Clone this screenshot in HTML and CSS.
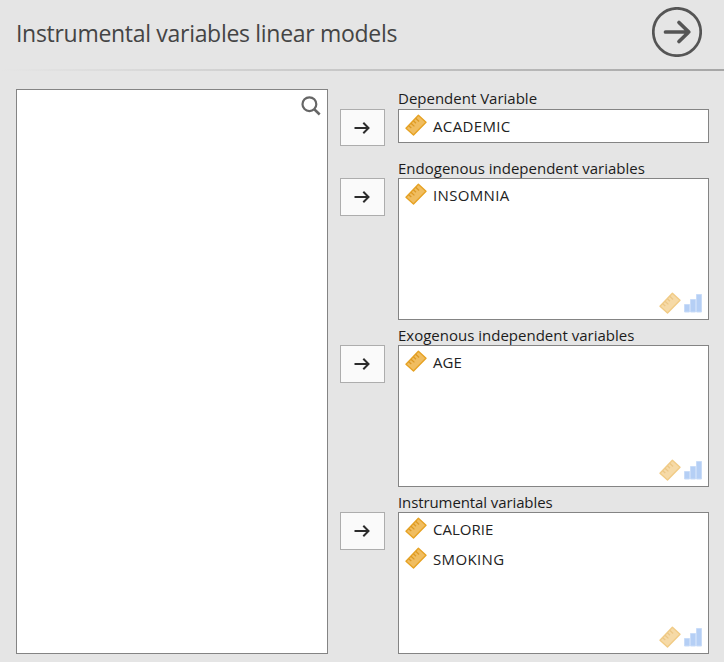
FILE: index.html
```html
<!DOCTYPE html>
<html lang="en">
<head>
<meta charset="utf-8">
<title>Instrumental variables linear models</title>
<link rel="stylesheet" href="styles.css">
</head>
<body>
<svg class="defs" aria-hidden="true">
  <symbol id="ruler" viewBox="0 0 22 22">
    <path d="M1 14.3 13.4 1.2 21 8.2 8.5 21z" fill="#f0bd60" stroke="#e6a223" stroke-width="1.4" stroke-linejoin="round"/>
    <path d="M3.7 11.7l2.6 2.4M6 9.2l3.4 3.2M8.4 6.8l2.6 2.4M10.7 4.3l3.4 3.2" fill="none" stroke="#dd9a25" stroke-width="1.3"/>
  </symbol>
  <symbol id="bars" viewBox="0 0 18 20">
    <path d="M.5 11.500h5v7.500h-5zM6.500 6.500h5v12.500h-5zM12.500 1.500h5v17.500h-5z" fill="#b5cff5" stroke="#c9dcf8"/>
  </symbol>
  <symbol id="arrow" viewBox="0 0 16 14">
    <path d="M.5 7h14M9.300 1.800 14.500 7l-5.200 5.200" fill="none" stroke="#2c2c2c" stroke-width="2"/>
  </symbol>
</svg>
<header class="header">
  <h1 class="title">Instrumental variables linear models</h1>
  <svg class="go" viewBox="0 0 50 50"><circle cx="25" cy="25" r="23.700" fill="none" stroke="#555" stroke-width="2.700"/><path d="M13.500 25h23M27 15.500 36.800 25 27 34.500" fill="none" stroke="#555" stroke-width="3.700" stroke-linecap="round" stroke-linejoin="round"/></svg>
</header>
<div class="rule"></div>
<main class="main">
  <section class="source">
    <svg class="search" viewBox="0 0 20 20"><circle cx="8.400" cy="8.200" r="6.900" fill="none" stroke="#666" stroke-width="2.200"/><path d="M13 13l5.700 5.500" stroke="#666" stroke-width="2.500"/></svg>
  </section>
  <div class="targets">
    <section class="row single">
      <button class="move"><svg><use href="#arrow"/></svg></button>
      <div class="field">
        <div class="label">Dependent Variable</div>
        <div class="box"><div class="item"><svg><use href="#ruler"/></svg><span class="wide">ACADEMIC</span></div></div>
      </div>
    </section>
    <section class="row">
      <button class="move"><svg><use href="#arrow"/></svg></button>
      <div class="field">
        <div class="label">Endogenous independent variables</div>
        <div class="box"><div class="item"><svg><use href="#ruler"/></svg><span class="wide">INSOMNIA</span></div>
          <div class="types"><svg class="r"><use href="#ruler"/></svg><svg class="b"><use href="#bars"/></svg></div></div>
      </div>
    </section>
    <section class="row">
      <button class="move"><svg><use href="#arrow"/></svg></button>
      <div class="field">
        <div class="label">Exogenous independent variables</div>
        <div class="box"><div class="item"><svg><use href="#ruler"/></svg><span>AGE</span></div>
          <div class="types"><svg class="r"><use href="#ruler"/></svg><svg class="b"><use href="#bars"/></svg></div></div>
      </div>
    </section>
    <section class="row">
      <button class="move"><svg><use href="#arrow"/></svg></button>
      <div class="field">
        <div class="label tight">Instrumental variables</div>
        <div class="box"><div class="item"><svg><use href="#ruler"/></svg><span>CALORIE</span></div>
          <div class="item"><svg><use href="#ruler"/></svg><span class="wide">SMOKING</span></div>
          <div class="types"><svg class="r"><use href="#ruler"/></svg><svg class="b"><use href="#bars"/></svg></div></div>
      </div>
    </section>
  </div>
</main>
</body>
</html>
```
FILE: styles.css
```css
* { box-sizing: border-box; }
body { margin: 0; height: 662px; overflow: hidden; background: #e5e5e5; color: #1c1c1c; font: 15px/20px "Open Sans", "Noto Sans", sans-serif; }
svg { display: block; flex: none; }
.defs { display: none; }
.header { height: 69px; padding: 7px 22px 0 16px; display: flex; justify-content: space-between; align-items: flex-start; }
.title { margin: 10px 0 0; font-size: 23px; line-height: 32px; font-weight: 400; letter-spacing: -.3px; color: #444; white-space: nowrap; }
.go { width: 50px; height: 50px; }
.rule { height: 2px; background: linear-gradient(90deg, #e5e5e5, #a6a6a6); }
.main { display: flex; gap: 12px; padding: 18px 15px 0 16px; }
.source { width: 312px; height: 565px; border: 1px solid #848484; background: #fff; display: flex; justify-content: flex-end; padding: 6px; }
.search { width: 20px; height: 20px; }
.targets { flex: 1; }
.row { display: flex; gap: 13px; height: 167px; }
.row.single { height: 69px; }
.move { flex: none; width: 45px; height: 38px; margin: 20px 0 0; padding: 0 1px 0 0; border: 1px solid #adadad; background: #fafafa; display: flex; align-items: center; justify-content: center; }
.single .move { height: 37px; }
.move svg { width: 16px; height: 14px; }
.field { flex: 1; }
.label { height: 20px; white-space: nowrap; }
.single .label { line-height: 18px; }
.tight { letter-spacing: -.1px; }
.box { height: 142px; border: 1px solid #848484; background: #fff; padding: 1px 6px 5px; display: flex; flex-direction: column; }
.single .box { height: 34px; padding: 1px 6px 0; }
.item { flex: none; height: 30px; display: flex; align-items: center; gap: 6px; color: #222; }
.item svg { width: 22px; height: 22px; margin-bottom: 2px; }
.wide { letter-spacing: .35px; }
.types { margin-top: auto; display: flex; justify-content: flex-end; align-items: center; gap: 3px; }
.types .r { width: 22px; height: 22px; opacity: .55; }
.types .b { width: 18px; height: 20px; }
```
